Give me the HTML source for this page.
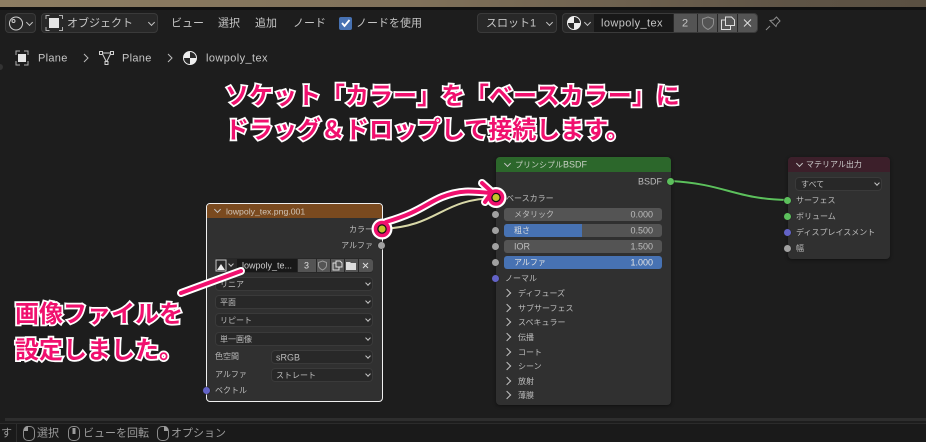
<!DOCTYPE html>
<html lang="ja"><head><meta charset="utf-8"><style>
html,body{margin:0;padding:0;background:#1d1d1d}
#p{position:relative;width:926px;height:442px;overflow:hidden;background:#1d1d1d;font-family:"Liberation Sans","Noto Sans CJK JP",sans-serif;color:#c8c8c8}
.a,.t,.d,.s,.c{position:absolute;box-sizing:border-box}
.t{white-space:nowrap;transform:translateY(calc(-50% + 1px));line-height:1}
.h{font-size:11px;color:#c6c6c6}
.n{font-size:8px;color:#bdbdbd}
.l{font-size:9px}
.d{background:#282828;border:1px solid #3a3a3a;border-radius:4px}
.hb{background:#282828;border:1px solid #3a3a3a;border-radius:4px}
.c{width:5px;height:5px;border-right:1px solid #c4c4c4;border-bottom:1px solid #c4c4c4;transform:rotate(45deg)}
.c.r{width:6px;height:6px;transform:rotate(-45deg)}
.s{width:7px;height:7px;border-radius:50%;background:#a1a1a1;box-shadow:0 0 0 .5px #222}
.f{position:absolute;left:504px;width:158px;height:13px;background:#545454;border-radius:3px;overflow:hidden}
.big{font-size:24px;font-weight:700;color:#f0106e;-webkit-text-stroke:3.500px #fff;paint-order:stroke fill;letter-spacing:0}
svg{position:absolute;left:0;top:0}
</style></head><body><div id="p">

<div class="a" style="left:0;top:0;width:926px;height:7px;background:linear-gradient(90deg,#8d7d62,#80715a 45%,#5f5446 85%,#5a5042)"></div>
<div class="a" style="left:0;top:7px;width:926px;height:3px;background:#111"></div>

<div class="a hb" style="left:5px;top:13px;width:31px;height:20px"></div>
<div class="a hb" style="left:41px;top:13px;width:117px;height:20px"></div>
<div class="a hb" style="left:477px;top:13px;width:80px;height:20px"></div>
<div class="a hb" style="left:562px;top:13px;width:196px;height:20px"></div>
<div class="a" style="left:594px;top:14px;width:79px;height:18px;background:#181818"></div>
<div class="a" style="left:674px;top:14px;width:23px;height:18px;background:#545454"></div>
<div class="a" style="left:698px;top:14px;width:19px;height:18px;background:#545454"></div>
<div class="a" style="left:718px;top:14px;width:19px;height:18px;background:#545454"></div>
<div class="a" style="left:738px;top:14px;width:19px;height:18px;background:#545454;border-radius:0 3px 3px 0"></div>

<div class="t h" style="left:67px;top:23px">オブジェクト</div>
<div class="c" style="left:149px;top:20px"></div>
<div class="c" style="left:27px;top:20px"></div>
<div class="t h" style="left:171px;top:23px">ビュー</div>
<div class="t h" style="left:218px;top:23px">選択</div>
<div class="t h" style="left:255px;top:23px">追加</div>
<div class="t h" style="left:293px;top:23px">ノード</div>
<div class="a" style="left:339px;top:17px;width:13px;height:13px;background:#4772b3;border-radius:2px"></div>
<div class="t h" style="left:356px;top:23px">ノードを使用</div>
<div class="t h" style="left:486px;top:23px">スロット1</div>
<div class="c" style="left:547px;top:20px"></div>
<div class="c" style="left:585px;top:20px"></div>
<div class="t h" style="left:601px;top:23px;letter-spacing:.4px">lowpoly_tex</div>
<div class="t h" style="left:682px;top:23px">2</div>

<div class="t h" style="left:38px;top:58px;letter-spacing:.3px">Plane</div>
<div class="t h" style="left:122px;top:58px;letter-spacing:.3px">Plane</div>
<div class="t h" style="left:206px;top:58px;letter-spacing:.4px">lowpoly_tex</div>

<svg width="926" height="442" fill="none">
  <!-- header icons -->
  <circle cx="16" cy="23.500" r="6.500" stroke="#d0d0d0"/><circle cx="13.500" cy="21" r="1.500" stroke="#d0d0d0"/>
  <rect x="49" y="18" width="10" height="10" fill="#e4e4e4"/>
  <path d="M46 19v-3.500h3.500M59 15.500h3.500V19M62.500 27v3.500H59M49.500 30.500H46V27" stroke="#b0b0b0"/>
  <path d="M342 23l2.500 3 5-6" stroke="#fff" stroke-width="1.800"/>
  <circle cx="574" cy="23" r="6.500" fill="#eee"/><path d="M574 16.500a6.500 6.500 0 0 1 6.500 6.500H574zM574 23v6.500a6.500 6.500 0 0 1-6.500-6.500z" fill="#2a2a2a"/><circle cx="574" cy="23" r="6.500" stroke="#eee"/>
  <path d="M708 17l5.500 2v4c0 3-2.500 5-5.500 6.500-3-1.500-5.500-3.500-5.500-6.500v-4z" stroke="#909090"/>
  <path d="M725.500 20h-4v9.500h9V25M725.500 17v8.500h9V20l-3-3z" stroke="#dedede"/>
  <path d="M744 19.500l7 7M751 19.500l-7 7" stroke="#dedede"/>
  <path d="M766 30l4-4M770 20.500l6 6 1-2.500 3-3-3.500-4-3 3z" stroke="#8d8d8d"/>
  <!-- breadcrumb -->
  <rect x="18" y="54" width="8" height="8" fill="#e4e4e4"/>
  <path d="M16 55v-4h4M24 51h4v4M28 61v4h-4M20 65h-4v-4" stroke="#b0b0b0"/>
  <path d="M84 54l4 4-4 4M168 54l4 4-4 4" stroke="#bbb"/>
  <path d="M102 53h9l-4.500 9z" stroke="#d0d0d0"/>
  <rect x="99.500" y="51.500" width="3" height="3" fill="#1d1d1d" stroke="#d0d0d0"/><rect x="110.500" y="51.500" width="3" height="3" fill="#1d1d1d" stroke="#d0d0d0"/><rect x="105" y="61.500" width="3" height="3" fill="#1d1d1d" stroke="#d0d0d0"/>
  <circle cx="190" cy="58" r="6.500" fill="#eee"/><path d="M190 51.500a6.500 6.500 0 0 1 6.500 6.500H190zM190 58v6.500a6.500 6.500 0 0 1-6.500-6.500z" fill="#2a2a2a"/><circle cx="190" cy="58" r="6.500" stroke="#eee"/>
  <circle cx="0" cy="67" r="3" fill="#333"/>
  <!-- links -->
  <path d="M671 181C725 184 735 199 787 200" stroke="#1a1a1a" stroke-width="3.500"/>
  <path d="M671 181C725 184 735 199 787 200" stroke="#5cc05c" stroke-width="2"/>
  <path d="M382 229C440 226 440 199 496 198" stroke="#1a1a1a" stroke-width="3.500"/>
  <path d="M382 229C440 226 440 199 496 198" stroke="#d8d8a8" stroke-width="2"/>
</svg>

<!-- image node -->
<div class="a" style="left:206px;top:203px;width:177px;height:199px;background:#303030;border:1px solid #f0f0f0;border-radius:4px;overflow:hidden"><div style="height:14px;background:#7a4a1f"></div></div>
<div class="c" style="left:215px;top:207px"></div>
<div class="t n l" style="left:226px;top:211px;color:#cfc4b8;font-size:8.700px">lowpoly_tex.png.001</div>
<div class="t n" style="right:553px;top:229px">カラー</div>
<div class="t n" style="right:553px;top:245px">アルファ</div>
<div class="a" style="left:215px;top:258px;width:158px;height:15px;background:#282828;border-radius:3px"></div>
<div class="a" style="left:237px;top:259px;width:60px;height:13px;background:#181818"></div>
<div class="a" style="left:298px;top:259px;width:18px;height:13px;background:#545454"></div>
<div class="a" style="left:317px;top:259px;width:13px;height:13px;background:#545454"></div>
<div class="a" style="left:331px;top:259px;width:13px;height:13px;background:#545454"></div>
<div class="a" style="left:345px;top:259px;width:13px;height:13px;background:#545454"></div>
<div class="a" style="left:359px;top:259px;width:14px;height:13px;background:#545454;border-radius:0 3px 3px 0"></div>
<div class="c" style="left:229px;top:262px;width:4px;height:4px"></div>
<div class="t n l" style="left:242px;top:265px;color:#ccc">lowpoly_te...</div>
<div class="t n l" style="left:304px;top:265px;color:#ddd">3</div>

<div class="d" style="left:215px;top:277px;width:158px;height:14px"></div><div class="t n" style="left:220px;top:284px">リニア</div><div class="c" style="left:366px;top:281px;width:4px;height:4px"></div>
<div class="d" style="left:215px;top:295px;width:158px;height:14px"></div><div class="t n" style="left:220px;top:302px">平面</div><div class="c" style="left:366px;top:299px;width:4px;height:4px"></div>
<div class="d" style="left:215px;top:313px;width:158px;height:14px"></div><div class="t n" style="left:220px;top:320px">リピート</div><div class="c" style="left:366px;top:317px;width:4px;height:4px"></div>
<div class="d" style="left:215px;top:332px;width:158px;height:14px"></div><div class="t n" style="left:220px;top:339px">単一画像</div><div class="c" style="left:366px;top:336px;width:4px;height:4px"></div>
<div class="t n" style="left:215px;top:356px">色空間</div>
<div class="d" style="left:271px;top:350px;width:102px;height:14px"></div><div class="t n l" style="left:276px;top:357px">sRGB</div><div class="c" style="left:366px;top:354px;width:4px;height:4px"></div>
<div class="t n" style="left:215px;top:374px">アルファ</div>
<div class="d" style="left:271px;top:368px;width:102px;height:14px"></div><div class="t n" style="left:276px;top:375px">ストレート</div><div class="c" style="left:366px;top:372px;width:4px;height:4px"></div>
<div class="t n" style="left:215px;top:390px">ベクトル</div>
<div class="s" style="left:203px;top:387px;background:#6363c7"></div>
<div class="s" style="left:378px;top:242px"></div>

<!-- principled node -->
<div class="a" style="left:496px;top:157px;width:175px;height:248px;background:#303030;border-radius:4px;overflow:hidden;box-shadow:0 1px 3px #111"><div style="height:15px;background:#2c672b"></div></div>
<div class="c" style="left:505px;top:161px"></div>
<div class="t n" style="left:515px;top:164px;color:#c8d0c4">プリンシプル<span class="l">BSDF</span></div>
<div class="t n l" style="right:264px;top:181px">BSDF</div>
<div class="s" style="left:667px;top:178px;background:#5cc05c"></div>
<div class="t n" style="left:506px;top:198px">ベースカラー</div>
<div class="f" style="top:208px"></div>
<div class="f" style="top:224px"><div style="width:78px;height:13px;background:#4772b3"></div></div>
<div class="f" style="top:240px"></div>
<div class="f" style="top:256px;background:#4772b3"></div>
<div class="t n" style="left:514px;top:214px">メタリック</div><div class="t n l" style="right:273px;top:214px">0.000</div>
<div class="t n" style="left:514px;top:230px;color:#ddd">粗さ</div><div class="t n l" style="right:273px;top:230px">0.500</div>
<div class="t n l" style="left:514px;top:246px">IOR</div><div class="t n l" style="right:273px;top:246px">1.500</div>
<div class="t n" style="left:514px;top:262px;color:#e2e2e2">アルファ</div><div class="t n l" style="right:273px;top:262px;color:#e2e2e2">1.000</div>
<div class="t n" style="left:505px;top:278px">ノーマル</div>
<div class="s" style="left:492px;top:211px"></div><div class="s" style="left:492px;top:227px"></div><div class="s" style="left:492px;top:243px"></div><div class="s" style="left:492px;top:259px"></div>
<div class="s" style="left:492px;top:275px;background:#6363c7"></div>

<div class="c r" style="left:504px;top:290px"></div><div class="t n" style="left:518px;top:293px">ディフューズ</div>
<div class="c r" style="left:504px;top:305px"></div><div class="t n" style="left:518px;top:308px">サブサーフェス</div>
<div class="c r" style="left:504px;top:319px"></div><div class="t n" style="left:518px;top:322px">スペキュラー</div>
<div class="c r" style="left:504px;top:334px"></div><div class="t n" style="left:518px;top:337px">伝播</div>
<div class="c r" style="left:504px;top:349px"></div><div class="t n" style="left:518px;top:352px">コート</div>
<div class="c r" style="left:504px;top:363px"></div><div class="t n" style="left:518px;top:366px">シーン</div>
<div class="c r" style="left:504px;top:378px"></div><div class="t n" style="left:518px;top:381px">放射</div>
<div class="c r" style="left:504px;top:392px"></div><div class="t n" style="left:518px;top:395px">薄膜</div>

<!-- output node -->
<div class="a" style="left:788px;top:157px;width:102px;height:102px;background:#303030;border-radius:4px;overflow:hidden;box-shadow:0 1px 3px #111"><div style="height:15px;background:#3c1f2a"></div></div>
<div class="c" style="left:797px;top:161px"></div>
<div class="t n" style="left:806px;top:164px;color:#ccc">マテリアル出力</div>
<div class="d" style="left:795px;top:177px;width:87px;height:14px"></div>
<div class="t n" style="left:801px;top:184px">すべて</div>
<div class="c" style="left:875px;top:181px;width:4px;height:4px"></div>
<div class="t n" style="left:796px;top:200px">サーフェス</div>
<div class="t n" style="left:796px;top:216px">ボリューム</div>
<div class="t n" style="left:796px;top:232px">ディスプレイスメント</div>
<div class="t n" style="left:796px;top:248px">幅</div>
<div class="s" style="left:784px;top:197px;background:#5cc05c"></div>
<div class="s" style="left:784px;top:213px;background:#5cc05c"></div>
<div class="s" style="left:784px;top:229px;background:#6363c7"></div>
<div class="s" style="left:784px;top:245px"></div>

<!-- status bar -->
<div class="a" style="left:5px;top:418px;width:921px;height:3px;background:#2e2e2e"></div>
<div class="a" style="left:0;top:423px;width:926px;height:19px;background:#1a1a1a;border-top:1px solid #2b2b2b"></div>
<div class="a" style="left:16px;top:424px;width:1px;height:18px;background:#2e2e2e"></div>
<div class="t h" style="left:1px;top:433px;color:#9c9c9c">す</div>
<div class="t h" style="left:37px;top:433px;color:#9c9c9c">選択</div>
<div class="t h" style="left:83px;top:433px;color:#9c9c9c">ビューを回転</div>
<div class="t h" style="left:171px;top:433px;color:#9c9c9c">オプション</div>

<svg width="926" height="442" fill="none">
  <!-- image icon etc -->
  <rect x="216" y="260" width="10" height="11" stroke="#c8c8c8"/>
  <path d="M217 270l4-6 4 6z" fill="#eee"/>
  <path d="M322.500 261l4 1.500v3c0 2-2 3.500-4 4.500-2-1-4-2.500-4-4.500v-3z" stroke="#999"/>
  <path d="M336 263h-3v7h6v-3M336 261v6h6v-4l-2-2z" stroke="#ddd"/>
  <path d="M346 262h4l1 1h5v7h-10z" fill="#ddd"/>
  <path d="M363 263l5 5M368 263l-5 5" stroke="#ddd"/>
  <!-- status mouse icons -->
  <rect x="23.500" y="426.500" width="11" height="14" rx="4.500" stroke="#8c8c8c"/><path d="M24 431v-2a4 4 0 0 1 4-3v5z" fill="#9c9c9c"/>
  <rect x="68.500" y="426.500" width="11" height="14" rx="4.500" stroke="#8c8c8c"/><rect x="72.500" y="428" width="3" height="6" fill="#9c9c9c"/>
  <rect x="157.500" y="426.500" width="11" height="14" rx="4.500" stroke="#8c8c8c"/><path d="M168 431v-2a4 4 0 0 0-4-3v5z" fill="#9c9c9c"/>
  <!-- annotation: white outline -->
  <g stroke="#fff" stroke-width="8" stroke-linecap="round" stroke-linejoin="round">
    <path d="M386 222C420 212 425 204 442 197C460 190 470 191 490 193"/>
    <path d="M482 183L492 192L485 202"/>
    <path d="M181 293L241 271"/>
  </g>
  <circle cx="382" cy="229" r="10.500" fill="#fff"/>
  <circle cx="496" cy="197.500" r="10.500" fill="#fff"/>
  <circle cx="382" cy="229" r="6.500" fill="#111" stroke="#f0106e" stroke-width="3.500"/>
  <circle cx="496" cy="197.500" r="6.500" fill="#111" stroke="#f0106e" stroke-width="3.500"/>
  <circle cx="382" cy="229" r="3.500" fill="#c4c42a"/>
  <circle cx="496" cy="197.500" r="3.500" fill="#c4c42a"/>
  <g stroke="#f0106e" stroke-width="4" stroke-linecap="round" stroke-linejoin="round">
    <path d="M386 222C420 212 425 204 442 197C460 190 470 191 490 193"/>
    <path d="M482 183L492 192L485 202"/>
    <path d="M181 293L241 271"/>
  </g>
</svg>

<div class="t big" style="left:225px;top:96px">ソケット「カラー」を「ベースカラー」に</div>
<div class="t big" style="left:225px;top:130px">ドラッグ＆ドロップして接続します。</div>
<div class="t big" style="left:15px;top:314px">画像ファイルを</div>
<div class="t big" style="left:15px;top:350px">設定しました。</div>

</div></body></html>
